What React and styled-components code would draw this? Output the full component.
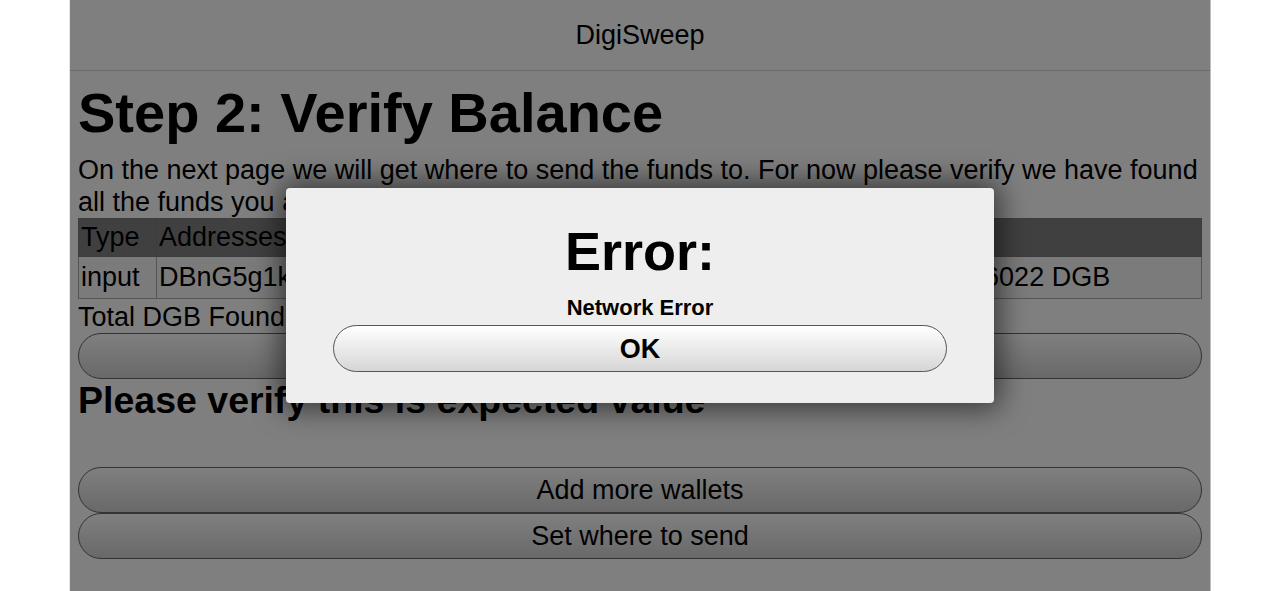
import React from "react";
import styled, { createGlobalStyle } from "styled-components";

const GlobalStyle = createGlobalStyle`
  html, body {
    margin: 0;
    padding: 0;
    background: #fff;
  }
  body {
    font-family: "Liberation Sans", Arial, Helvetica, sans-serif;
    color: #000;
  }
`;

const Page = styled.div`
  position: relative;
  width: 1140px;
  height: 100vh;
  margin: 0 auto;
  background: #fff;
  box-shadow: 1px 0 0 #bdbdbd, -1px 0 0 #e4e4e4;
`;

const Header = styled.header`
  height: 70px;
  border-bottom: 1px solid #d4d4d4;
  display: flex;
  align-items: center;
  justify-content: center;
  font-size: 27px;
`;

const Content = styled.main`
  padding: 0 8px;
`;

const Title = styled.h1`
  margin: 10px 0 9px;
  font-size: 56px;
  line-height: 64px;
  font-weight: bold;
`;

const Text = styled.p`
  margin: 0;
  font-size: 27px;
  line-height: 32px;
`;

const Table = styled.table`
  width: 100%;
  border-collapse: collapse;
  font-size: 27px;
  line-height: 33px;

  th {
    background: #808080;
    font-weight: normal;
    text-align: left;
    padding: 2px 2px;
    border: 1px solid #7a7a7a;
  }

  td {
    background: #f6f6f6;
    padding: 4px 2px;
    border: 1px solid #aaa;
  }
`;

const Line = styled.div`
  padding-top: 3px;
  font-size: 27px;
  line-height: 30px;
`;

const Button = styled.button`
  display: flex;
  align-items: center;
  justify-content: center;
  box-sizing: border-box;
  width: 100%;
  height: 46px;
  margin: ${(p) => (p.$gap ? "1px 0 0" : "0")};
  padding: 0;
  border: 1px solid #666;
  border-radius: 23px;
  background: linear-gradient(#fff, #d2d2d2);
  font-family: inherit;
  font-size: 27px;
  color: #000;
`;

const SubTitle = styled.h2`
  margin: 0 0 45px;
  font-size: 37.5px;
  line-height: 43px;
  font-weight: bold;
`;

const Overlay = styled.div`
  position: absolute;
  inset: 0;
  background: rgba(0, 0, 0, 0.5);
  display: flex;
  align-items: center;
  justify-content: center;
`;

const Dialog = styled.div`
  box-sizing: border-box;
  width: 708px;
  padding: 32px 47px 31px;
  background: #eee;
  border-radius: 4px;
  box-shadow: 0 0 28px 6px rgba(0, 0, 0, 0.55);
  display: flex;
  flex-direction: column;
  align-items: stretch;
  text-align: center;
`;

const DialogTitle = styled.div`
  font-size: 54px;
  line-height: 62px;
  font-weight: bold;
`;

const DialogMessage = styled.div`
  margin-top: 14px;
  font-size: 22px;
  line-height: 24px;
  font-weight: bold;
`;

const OkButton = styled(Button)`
  height: 47px;
  margin-top: 5px;
  padding-top: 2px;
  border-color: #555;
  border-radius: 24px;
  background: linear-gradient(#fff, #d6d6d6);
  font-weight: bold;
`;

export default function App() {
  return (
    <>
      <GlobalStyle />
      <Page>
        <Header>DigiSweep</Header>
        <Content>
          <Title>Step 2: Verify Balance</Title>
          <Text>
            On the next page we will get where to send the funds to. For now
            please verify we have found all the funds you are expecting.
          </Text>
          <Table>
            <thead>
              <tr>
                <th style={{ width: 73 }}>Type</th>
                <th>Addresses</th>
                <th style={{ width: 305 }}>Balance</th>
              </tr>
            </thead>
            <tbody>
              <tr>
                <td>input</td>
                <td>DBnG5g1kQ7xV3mYpR2sWfH8tLcN9aZ</td>
                <td>2,917.36022 DGB</td>
              </tr>
            </tbody>
          </Table>
          <Line>Total DGB Found: 2,917.36022</Line>
          <Button $gap aria-label="Refresh balance" />
          <SubTitle>Please verify this is expected value</SubTitle>
          <Button>Add more wallets</Button>
          <Button>Set where to send</Button>
        </Content>
        <Overlay>
          <Dialog>
            <DialogTitle>Error:</DialogTitle>
            <DialogMessage>Network Error</DialogMessage>
            <OkButton>OK</OkButton>
          </Dialog>
        </Overlay>
      </Page>
    </>
  );
}
